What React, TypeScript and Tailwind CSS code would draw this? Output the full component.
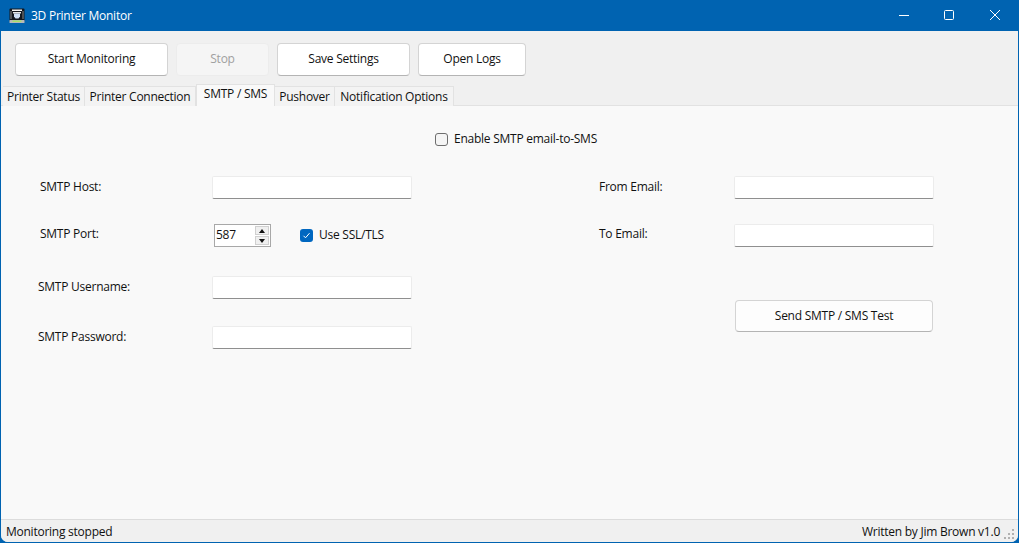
import React from 'react';

const font = 'font-["Open_Sans","Noto_Sans",sans-serif] tracking-[-0.25px]';

const ToolButton = ({ label, width, disabled }: { label: string; width: string; disabled?: boolean }) => (
  <div
    className={`${width} h-[33px] flex items-center justify-center rounded-[4px] border pb-[2px] text-[12px] ${
      disabled
        ? 'bg-[#f5f5f5] border-[#ececec] text-[#a0a0a0]'
        : 'bg-white border-[#d4d4d4] border-b-[#b4b4b4] text-[#111]'
    }`}
  >
    {label}
  </div>
);

const Tab = ({ label, width, active }: { label: string; width: string; active?: boolean }) => (
  <div
    className={`${width} flex justify-center border-r border-[#e2e2e2] text-[12px] text-[#111] ${
      active
        ? 'h-[22px] items-start bg-[#f9f9f9] border-t border-l -mb-[1px] relative z-10'
        : 'h-[20px] mt-[2px] items-center bg-[#f3f3f3] border-t'
    }`}
  >
    {label}
  </div>
);

const TextInput = ({ width = 'w-[200px]' }: { width?: string }) => (
  <div className={`${width} h-[23px] self-start bg-white border border-[#ececec] border-b-[#8f8f8f] rounded-[2px]`} />
);

const Row = ({ label, labelWidth, className, children }: { label: string; labelWidth: string; className?: string; children: React.ReactNode }) => (
  <div className={`flex items-center ${className ?? ''}`}>
    <div className={`${labelWidth} text-[12px] text-[#111] shrink-0`}>{label}</div>
    {children}
  </div>
);

export default function App() {
  return (
    <div className={`${font} w-[1019px] h-[543px] flex flex-col bg-[#0063b1] overflow-hidden`}>
      {/* title bar */}
      <div className="h-[31px] shrink-0 flex items-center text-white">
        <svg width="16" height="16" viewBox="0 0 16 16" className="ml-[9px] mr-[6px]">
          <rect x="0.5" y="0.5" width="15" height="13" rx="1" fill="#14181f" />
          <rect x="3" y="1.5" width="10" height="1.5" fill="#f2f2f2" />
          <rect x="4" y="4" width="8" height="1.5" fill="#e8e8e8" />
          <path d="M5 5.5h6v3l-1.5 2h-3L5 8.5z" fill="#cfe0f7" />
          <rect x="1.5" y="3" width="1" height="8" fill="#8a8a8a" />
          <rect x="13.5" y="3" width="1" height="8" fill="#8a8a8a" />
          <rect x="0.5" y="12" width="15" height="3" rx="0.5" fill="#b8b8b8" />
          <rect x="3.5" y="12.5" width="9" height="1.5" fill="#a6e06a" />
        </svg>
        <span className="text-[12px]">3D Printer Monitor</span>
        <div className="ml-auto flex items-center">
          <svg width="46" height="31" viewBox="0 0 46 31" className="block">
            <path d="M19 15.5h10" stroke="#fff" strokeWidth="1" />
          </svg>
          <svg width="46" height="31" viewBox="0 0 46 31" className="block">
            <rect x="18.5" y="10.5" width="9" height="9" rx="1" fill="none" stroke="#fff" strokeWidth="1" />
          </svg>
          <svg width="46" height="31" viewBox="0 0 46 31" className="block mr-[1px]">
            <path d="M18 10l10 10M28 10L18 20" stroke="#fff" strokeWidth="1" />
          </svg>
        </div>
      </div>

      {/* window body */}
      <div className="flex-1 flex flex-col mx-[1px] mb-[1px] rounded-b-[7px] overflow-hidden bg-[#f0f0f0] min-h-0">
        <div className="h-[53px] shrink-0 flex items-end pb-[8px] pl-[14px] gap-[8px]">
          <ToolButton label="Start Monitoring" width="w-[153px]" />
          <ToolButton label="Stop" width="w-[93px]" disabled />
          <ToolButton label="Save Settings" width="w-[133px]" />
          <ToolButton label="Open Logs" width="w-[108px]" />
        </div>

        <div className="h-[22px] shrink-0 flex items-start pl-[2px] border-b border-[#e2e2e2]">
          <Tab label="Printer Status" width="w-[82px]" />
          <Tab label="Printer Connection" width="w-[111px]" />
          <Tab label="SMTP / SMS" width="w-[79px]" active />
          <Tab label="Pushover" width="w-[60px]" />
          <Tab label="Notification Options" width="w-[119px]" />
        </div>

        {/* tab page */}
        <div className="flex-1 flex flex-col bg-[#f9f9f9] border-b border-[#dcdcdc] min-h-0">
          <div className="flex items-center pl-[434px] pt-[24px] text-[12px] text-[#111]">
            <div className="w-[13px] h-[13px] rounded-[3px] border border-[#6e6e6e] bg-[#f5f5f5] mr-[6px]" />
            Enable SMTP email-to-SMS
          </div>

          <div className="flex pt-[28px]">
            <div className="w-[598px] shrink-0 flex flex-col">
              <Row label="SMTP Host:" labelWidth="w-[211px] pl-[39px] -mt-[2px]" className="h-[24px]">
                <TextInput />
              </Row>
              <Row label="SMTP Port:" labelWidth="w-[211px] pl-[39px] -mt-[4px]" className="h-[24px] mt-[24px]">
                <div className="w-[57px] h-[23px] ml-[2px] self-start flex items-center justify-between bg-white border border-[#a8a8a8] pl-[1px] pr-[1px] text-[12px] text-[#111]">
                  <span className="-mt-[2px]">587</span>
                  <div className="flex flex-col gap-[1px]">
                    <div className="w-[14px] h-[9px] flex items-center justify-center bg-[#f0f0f0] border border-[#d0d0d0]">
                      <div className="w-0 h-0 border-x-[3px] border-x-transparent border-b-[4px] border-b-[#111]" />
                    </div>
                    <div className="w-[14px] h-[9px] flex items-center justify-center bg-[#f0f0f0] border border-[#d0d0d0]">
                      <div className="w-0 h-0 border-x-[3px] border-x-transparent border-t-[4px] border-t-[#111]" />
                    </div>
                  </div>
                </div>
                <div className="ml-[29px] flex items-center text-[12px] text-[#111] -mt-[2px]">
                  <div className="w-[13px] h-[13px] rounded-[3px] bg-[#0067c0] mr-[6px] flex items-center justify-center">
                    <svg width="9" height="9" viewBox="0 0 9 9">
                      <path d="M1.5 4.8l2 2 4-4.6" fill="none" stroke="#fff" strokeWidth="1" />
                    </svg>
                  </div>
                  Use SSL/TLS
                </div>
              </Row>
              <Row label="SMTP Username:" labelWidth="w-[211px] pl-[37px] -mt-[2px]" className="h-[24px] mt-[28px]">
                <TextInput />
              </Row>
              <Row label="SMTP Password:" labelWidth="w-[211px] pl-[37px] -mt-[2px]" className="h-[24px] mt-[26px]">
                <TextInput />
              </Row>
            </div>
            <div className="flex-1 flex flex-col">
              <Row label="From Email:" labelWidth="w-[135px] -mt-[2px]" className="h-[24px]">
                <TextInput />
              </Row>
              <Row label="To Email:" labelWidth="w-[135px] -mt-[4px]" className="h-[24px] mt-[24px]">
                <TextInput />
              </Row>
              <div className="w-[198px] h-[32px] ml-[136px] mt-[52px] flex items-center justify-center bg-[#fdfdfd] border border-[#d4d4d4] border-b-[#b4b4b4] rounded-[4px] text-[12px] text-[#111]">
                Send SMTP / SMS Test
              </div>
            </div>
          </div>
        </div>

        {/* status bar */}
        <div className="h-[22px] shrink-0 flex items-center pl-[5px] pr-[3px] pt-[1px] text-[12px] text-[#111] bg-[#f0f0f0]">
          <span>Monitoring stopped</span>
          <span className="ml-auto mr-[4px]">Written by Jim Brown v1.0</span>
          <svg width="11" height="11" viewBox="0 0 11 11" className="mt-[5px]">
            <g fill="#b0b0b0">
              <rect x="8" y="0" width="2" height="2" />
              <rect x="4" y="4" width="2" height="2" />
              <rect x="8" y="4" width="2" height="2" />
              <rect x="0" y="8" width="2" height="2" />
              <rect x="4" y="8" width="2" height="2" />
              <rect x="8" y="8" width="2" height="2" />
            </g>
          </svg>
        </div>
      </div>
    </div>
  );
}
